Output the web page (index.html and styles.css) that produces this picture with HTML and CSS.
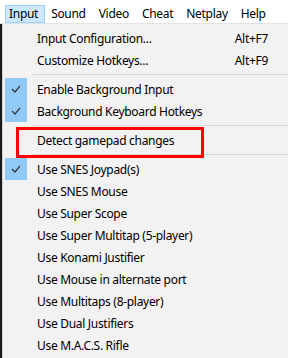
FILE: index.html
```html
<!DOCTYPE html>
<html lang="en">
<head>
  <meta charset="UTF-8" />
  <meta name="viewport" content="width=device-width, initial-scale=1.0" />
  <title>Input menu</title>
  <link rel="stylesheet" href="styles.css">
</head>
<body>
  <div class="menubar">
    <span class="menu-title active">Input</span>
    <span class="menu-title">Sound</span>
    <span class="menu-title">Video</span>
    <span class="menu-title">Cheat</span>
    <span class="menu-title">Netplay</span>
    <span class="menu-title">Help</span>
  </div>

  <div class="window">
    <div class="edge"></div>
    <div class="dropdown">
      <div class="item"><span class="check"></span><span class="label">Input Configuration...</span><span class="shortcut">Alt+F7</span></div>
      <div class="item"><span class="check"></span><span class="label">Customize Hotkeys...</span><span class="shortcut">Alt+F9</span></div>
      <div class="separator"></div>
      <div class="item"><span class="check on"><svg viewBox="0 0 22 22" width="22" height="22"><polyline points="7,11 10,14 15,8" /></svg></span><span class="label">Enable Background Input</span></div>
      <div class="item"><span class="check on"><svg viewBox="0 0 22 22" width="22" height="22"><polyline points="7,11 10,14 15,8" /></svg></span><span class="label">Background Keyboard Hotkeys</span></div>
      <div class="separator"></div>
      <div class="item"><span class="check"></span><span class="label">Detect gamepad changes</span></div>
      <div class="separator"></div>
      <div class="item"><span class="check on"><svg viewBox="0 0 22 22" width="22" height="22"><polyline points="7,11 10,14 15,8" /></svg></span><span class="label">Use SNES Joypad(s)</span></div>
      <div class="item"><span class="check"></span><span class="label">Use SNES Mouse</span></div>
      <div class="item"><span class="check"></span><span class="label">Use Super Scope</span></div>
      <div class="item"><span class="check"></span><span class="label">Use Super Multitap (5-player)</span></div>
      <div class="item"><span class="check"></span><span class="label">Use Konami Justifier</span></div>
      <div class="item"><span class="check"></span><span class="label">Use Mouse in alternate port</span></div>
      <div class="item"><span class="check"></span><span class="label">Use Multitaps (8-player)</span></div>
      <div class="item"><span class="check"></span><span class="label">Use Dual Justifiers</span></div>
      <div class="item"><span class="check"></span><span class="label">Use M.A.C.S. Rifle</span></div>
    </div>
  </div>

  <!-- annotation box round "Detect gamepad changes" -->
  <div class="highlight-box"></div>
</body>
</html>
```

FILE: styles.css
```css
body {
  margin: 0;
  font-family: 'Noto Sans', 'Liberation Sans', sans-serif;
  font-size: 12px;
  letter-spacing: -0.3px;
  color: #000;
  background: #fff;
  height: 358px;
  overflow: hidden;
}
.menubar {
  display: flex;
  align-items: flex-end;
  height: 24px;
  padding-left: 5px;
  box-sizing: border-box;
  background: #fff;
  border-bottom: 1px solid #e3e3e3;
}
.menu-title {
  height: 18px;
  line-height: 16px;
  padding: 0 6px 0 3px;
  border: 1px solid transparent;
  box-sizing: border-box;
  margin-right: 2px;
}
.menu-title.active {
  background: #cce8ff;
  border-color: #99d1ff;
}
.window {
  display: flex;
}
.edge {
  width: 2px;
  background: #1a1a1a;
}
.dropdown {
  flex: 1;
  background: #f2f2f2;
  border-left: 1px solid #cfcfcf;
  padding-top: 3px;
  height: 340px;
}
.item {
  display: flex;
  align-items: center;
  height: 22px;
}
.check {
  width: 22px;
  height: 22px;
  margin-left: 2px;
  flex-shrink: 0;
}
.check.on {
  background: #91c9f7;
}
.check svg {
  display: block;
}
.check polyline {
  fill: none;
  stroke: #3c3c3c;
  stroke-width: 1.3;
}
.label {
  margin-left: 10px;
  white-space: nowrap;
}
.shortcut {
  margin-left: auto;
  padding-right: 20px;
}
.separator {
  height: 1px;
  background: #d7d7d7;
  margin: 3px 0 3px 30px;
}
.highlight-box {
  position: absolute;
  left: 16px;
  top: 127px;
  width: 188px;
  height: 31px;
  border: 3px solid #ff0000;
  box-sizing: border-box;
}
```
